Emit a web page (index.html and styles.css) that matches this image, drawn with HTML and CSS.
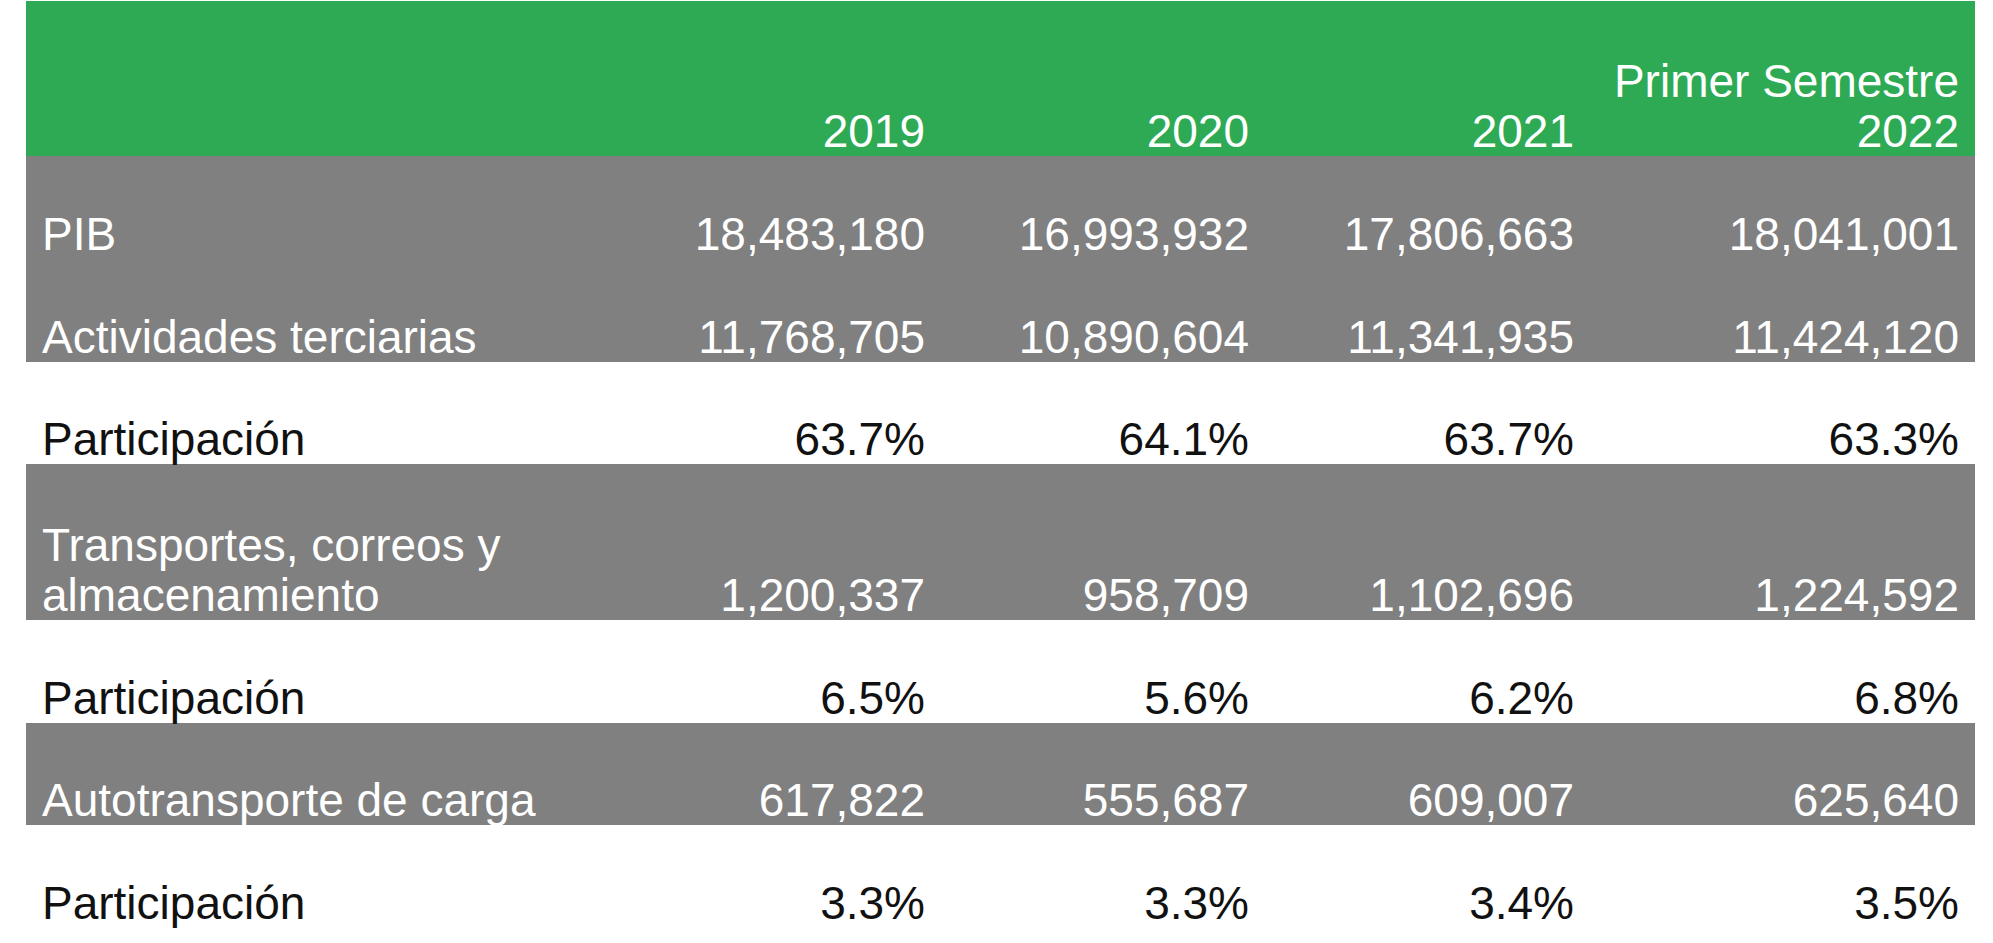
FILE: index.html
```html
<!DOCTYPE html>
<html lang="es">
<head>
<meta charset="utf-8">
<title>PIB y actividades terciarias</title>
<link rel="stylesheet" href="styles.css">
</head>
<body>
<div class="page">
  <div class="table">
    <div class="row head">
      <div class="cell label"></div>
      <div class="cell num">2019</div>
      <div class="cell num">2020</div>
      <div class="cell num">2021</div>
      <div class="cell num last">Primer Semestre<br>2022</div>
    </div>
    <div class="row gray r103">
      <div class="cell label">PIB</div>
      <div class="cell num">18,483,180</div>
      <div class="cell num">16,993,932</div>
      <div class="cell num">17,806,663</div>
      <div class="cell num last">18,041,001</div>
    </div>
    <div class="row gray r103">
      <div class="cell label">Actividades terciarias</div>
      <div class="cell num">11,768,705</div>
      <div class="cell num">10,890,604</div>
      <div class="cell num">11,341,935</div>
      <div class="cell num last">11,424,120</div>
    </div>
    <div class="row white r102">
      <div class="cell label">Participación</div>
      <div class="cell num">63.7%</div>
      <div class="cell num">64.1%</div>
      <div class="cell num">63.7%</div>
      <div class="cell num last">63.3%</div>
    </div>
    <div class="row gray r156">
      <div class="cell label">Transportes, correos y<br>almacenamiento</div>
      <div class="cell num">1,200,337</div>
      <div class="cell num">958,709</div>
      <div class="cell num">1,102,696</div>
      <div class="cell num last">1,224,592</div>
    </div>
    <div class="row white r103">
      <div class="cell label">Participación</div>
      <div class="cell num">6.5%</div>
      <div class="cell num">5.6%</div>
      <div class="cell num">6.2%</div>
      <div class="cell num last">6.8%</div>
    </div>
    <div class="row gray r102">
      <div class="cell label">Autotransporte de carga</div>
      <div class="cell num">617,822</div>
      <div class="cell num">555,687</div>
      <div class="cell num">609,007</div>
      <div class="cell num last">625,640</div>
    </div>
    <div class="row white r103">
      <div class="cell label">Participación</div>
      <div class="cell num">3.3%</div>
      <div class="cell num">3.3%</div>
      <div class="cell num">3.4%</div>
      <div class="cell num last">3.5%</div>
    </div>
  </div>
</div>
</body>
</html>
```

FILE: styles.css
```css
html, body {
  margin: 0;
  padding: 0;
  background: #ffffff;
}

.page {
  padding: 1px 0 0 26px;
}

.table {
  width: 1949px;
  font-family: "Liberation Sans", Arial, Helvetica, sans-serif;
  font-size: 46px;
  line-height: 50px;
}

.row {
  display: grid;
  grid-template-columns: 595px 324px 324px 325px 381px;
}

.head {
  height: 155px;
  background: #2eaa55;
  color: #ffffff;
}

.gray {
  background: #808080;
  color: #ffffff;
}

.white {
  background: #ffffff;
  color: #111111;
}

.r102 { height: 102px; }
.r103 { height: 103px; }
.r156 { height: 156px; }

.cell {
  display: flex;
  flex-direction: column;
  justify-content: flex-end;
  padding-bottom: 0;
  white-space: nowrap;
}

.label {
  padding-left: 16px;
  text-align: left;
}

.num {
  padding-right: 20px;
  text-align: right;
}

.num.last {
  padding-right: 16px;
}
```
